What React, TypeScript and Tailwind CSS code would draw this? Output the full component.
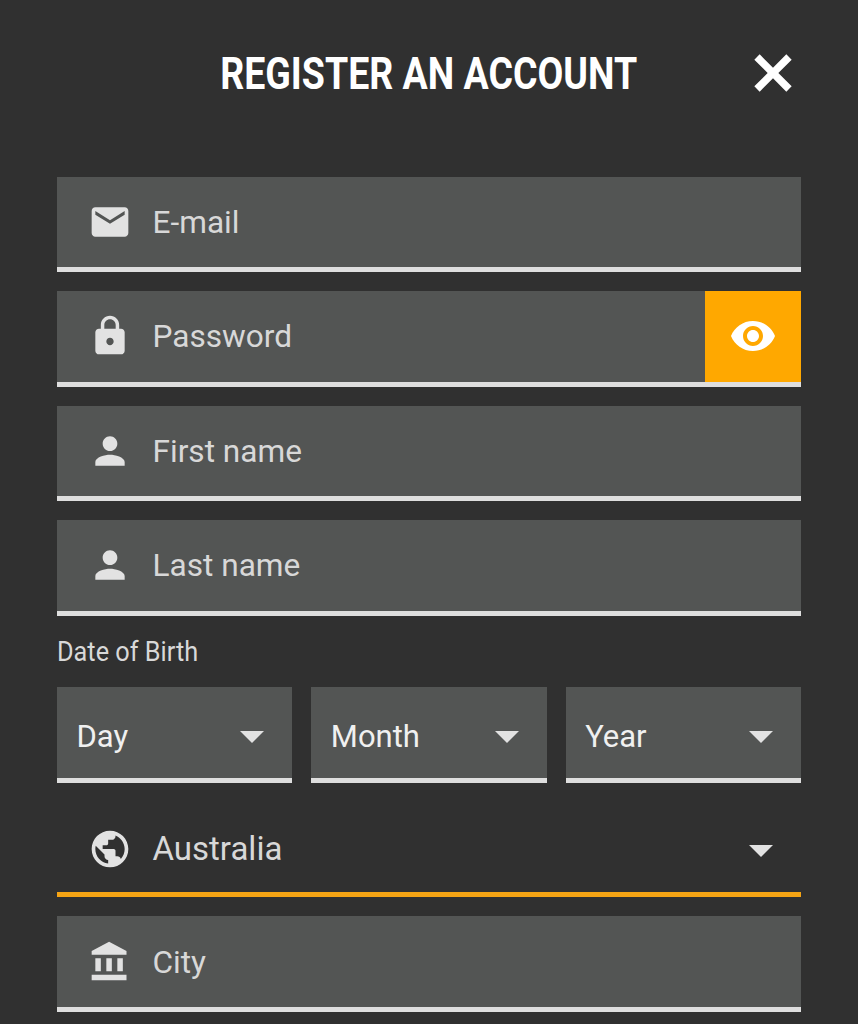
const sans = "font-['Roboto',sans-serif]";

const paths = {
  mail: 'M20 4H4c-1.1 0-1.99.9-1.99 2L2 18c0 1.1.9 2 2 2h16c1.1 0 2-.9 2-2V6c0-1.1-.9-2-2-2zm0 4l-8 5-8-5V6l8 5 8-5v2z',
  lock: 'M18 8h-1V6c0-2.76-2.24-5-5-5S7 3.24 7 6v2H6c-1.1 0-2 .9-2 2v10c0 1.1.9 2 2 2h12c1.1 0 2-.9 2-2V10c0-1.1-.9-2-2-2zm-6 9c-1.1 0-2-.9-2-2s.9-2 2-2 2 .9 2 2-.9 2-2 2zm3.1-9H8.9V6c0-1.71 1.39-3.1 3.1-3.1 1.71 0 3.1 1.39 3.1 3.1v2z',
  person: 'M12 12c2.21 0 4-1.79 4-4s-1.79-4-4-4-4 1.79-4 4 1.79 4 4 4zm0 2c-2.67 0-8 1.34-8 4v2h16v-2c0-2.66-5.33-4-8-4z',
  globe: 'M12 2C6.48 2 2 6.48 2 12s4.48 10 10 10 10-4.48 10-10S17.52 2 12 2zm-1 17.93c-3.95-.49-7-3.85-7-7.93 0-.62.08-1.21.21-1.79L9 15v1c0 1.1.9 2 2 2v1.93zm6.9-2.54c-.26-.81-1-1.39-1.9-1.39h-1v-3c0-.55-.45-1-1-1H8v-2h2c.55 0 1-.45 1-1V7h2c1.1 0 2-.9 2-2v-.41c2.93 1.19 5 4.06 5 7.41 0 2.08-.8 3.97-2.1 5.39z',
  bank: 'M4 10v7h3v-7H4zm6 0v7h3v-7h-3zM2 22h19v-3H2v3zm14-12v7h3v-7h-3zm-4.5-9L2 6v2h19V6l-9.5-5z',
  eye: 'M12 4.5C7 4.5 2.73 7.61 1 12c1.73 4.39 6 7.5 11 7.5s9.27-3.11 11-7.5c-1.73-4.39-6-7.5-11-7.5zM12 17c-2.76 0-5-2.24-5-5s2.24-5 5-5 5 2.24 5 5-2.24 5-5 5zm0-8c-1.66 0-3 1.34-3 3s1.34 3 3 3 3-1.34 3-3-1.34-3-3-3z',
  close: 'M19 7L17 5 12 10 7 5 5 7 10 12 5 17 7 19 12 14 17 19 19 17 14 12z',
};

function Icon({ d, className }: { d: string; className: string }) {
  return (
    <svg viewBox="0 0 24 24" fill="currentColor" className={className}>
      <path d={d} />
    </svg>
  );
}

function Arrow() {
  return (
    <svg viewBox="0 0 24 12" className="h-3 w-6 shrink-0 fill-[#e2e2e2]">
      <path d="M0 0h24L12 12z" />
    </svg>
  );
}

function Field({ icon, label, action, className }: { icon: string; label: string; action?: boolean; className?: string }) {
  return (
    <div className={`flex h-[95.5px] items-stretch border-b-[5px] border-[#dedede] bg-[#535554] ${className ?? ''}`}>
      <div className="flex w-[95.5px] shrink-0 items-center pl-[31px]">
        <Icon d={icon} className="h-[44px] w-[44px] shrink-0 text-[#e2e2e2]" />
      </div>
      <span className="flex-1 self-center pt-[2px] text-[31.6px] leading-none text-[#d8d8d8]">{label}</span>
      {action && (
        <div className="flex w-[96px] shrink-0 items-center justify-center bg-[#ffa800]">
          <Icon d={paths.eye} className="h-[48px] w-[48px] text-white" />
        </div>
      )}
    </div>
  );
}

function Select({ label }: { label: string }) {
  return (
    <div className="flex h-[95.5px] items-center justify-between border-b-[5px] border-[#dedede] bg-[#535554] pl-[19.5px] pr-[28px] pt-[10px]">
      <span className="pb-[2px] text-[31px] leading-none text-[#f0f0f0]">{label}</span>
      <Arrow />
    </div>
  );
}

export default function App() {
  return (
    <div className={`${sans} h-[1024px] overflow-hidden bg-[#303030]`}>
      <header className="grid h-[176.5px] grid-cols-[1fr_auto_1fr] items-start px-[53px] pt-[41px]">
        <div />
        <h1 className="scale-x-[0.852] whitespace-nowrap text-[44px] font-bold leading-[66px] text-white">
          REGISTER AN ACCOUNT
        </h1>
        <div className="flex justify-end">
          <Icon d={paths.close} className="h-[64px] w-[64px] text-white" />
        </div>
      </header>

      <main className="flex flex-col gap-[19px] px-[57px]">
        <Field icon={paths.mail} label="E-mail" />
        <Field icon={paths.lock} label="Password" action />
        <Field icon={paths.person} label="First name" />
        <div>
          <Field icon={paths.person} label="Last name" />
          <div className="flex h-[71.5px] items-center pt-[2px]">
            <span className="origin-left scale-x-[0.937] whitespace-nowrap text-[27px] leading-none text-[#d8d8d8]">
              Date of Birth
            </span>
          </div>
          <div className="grid grid-cols-3 gap-[19px]">
            <Select label="Day" />
            <Select label="Month" />
            <Select label="Year" />
          </div>
        </div>
        <div className="flex h-[95.5px] items-stretch border-b-[5px] border-[#f5a414] pt-[4px]">
          <div className="flex w-[95.5px] shrink-0 items-center pl-[31px]">
            <Icon d={paths.globe} className="h-[44px] w-[44px] shrink-0 text-[#e2e2e2]" />
          </div>
          <span className="flex-1 self-center text-[33px] leading-none text-[#d8d8d8]">Australia</span>
          <div className="flex items-center pr-[28px] pt-[4px]">
            <Arrow />
          </div>
        </div>
        <Field icon={paths.bank} label="City" className="pt-[2px]" />
      </main>
    </div>
  );
}
